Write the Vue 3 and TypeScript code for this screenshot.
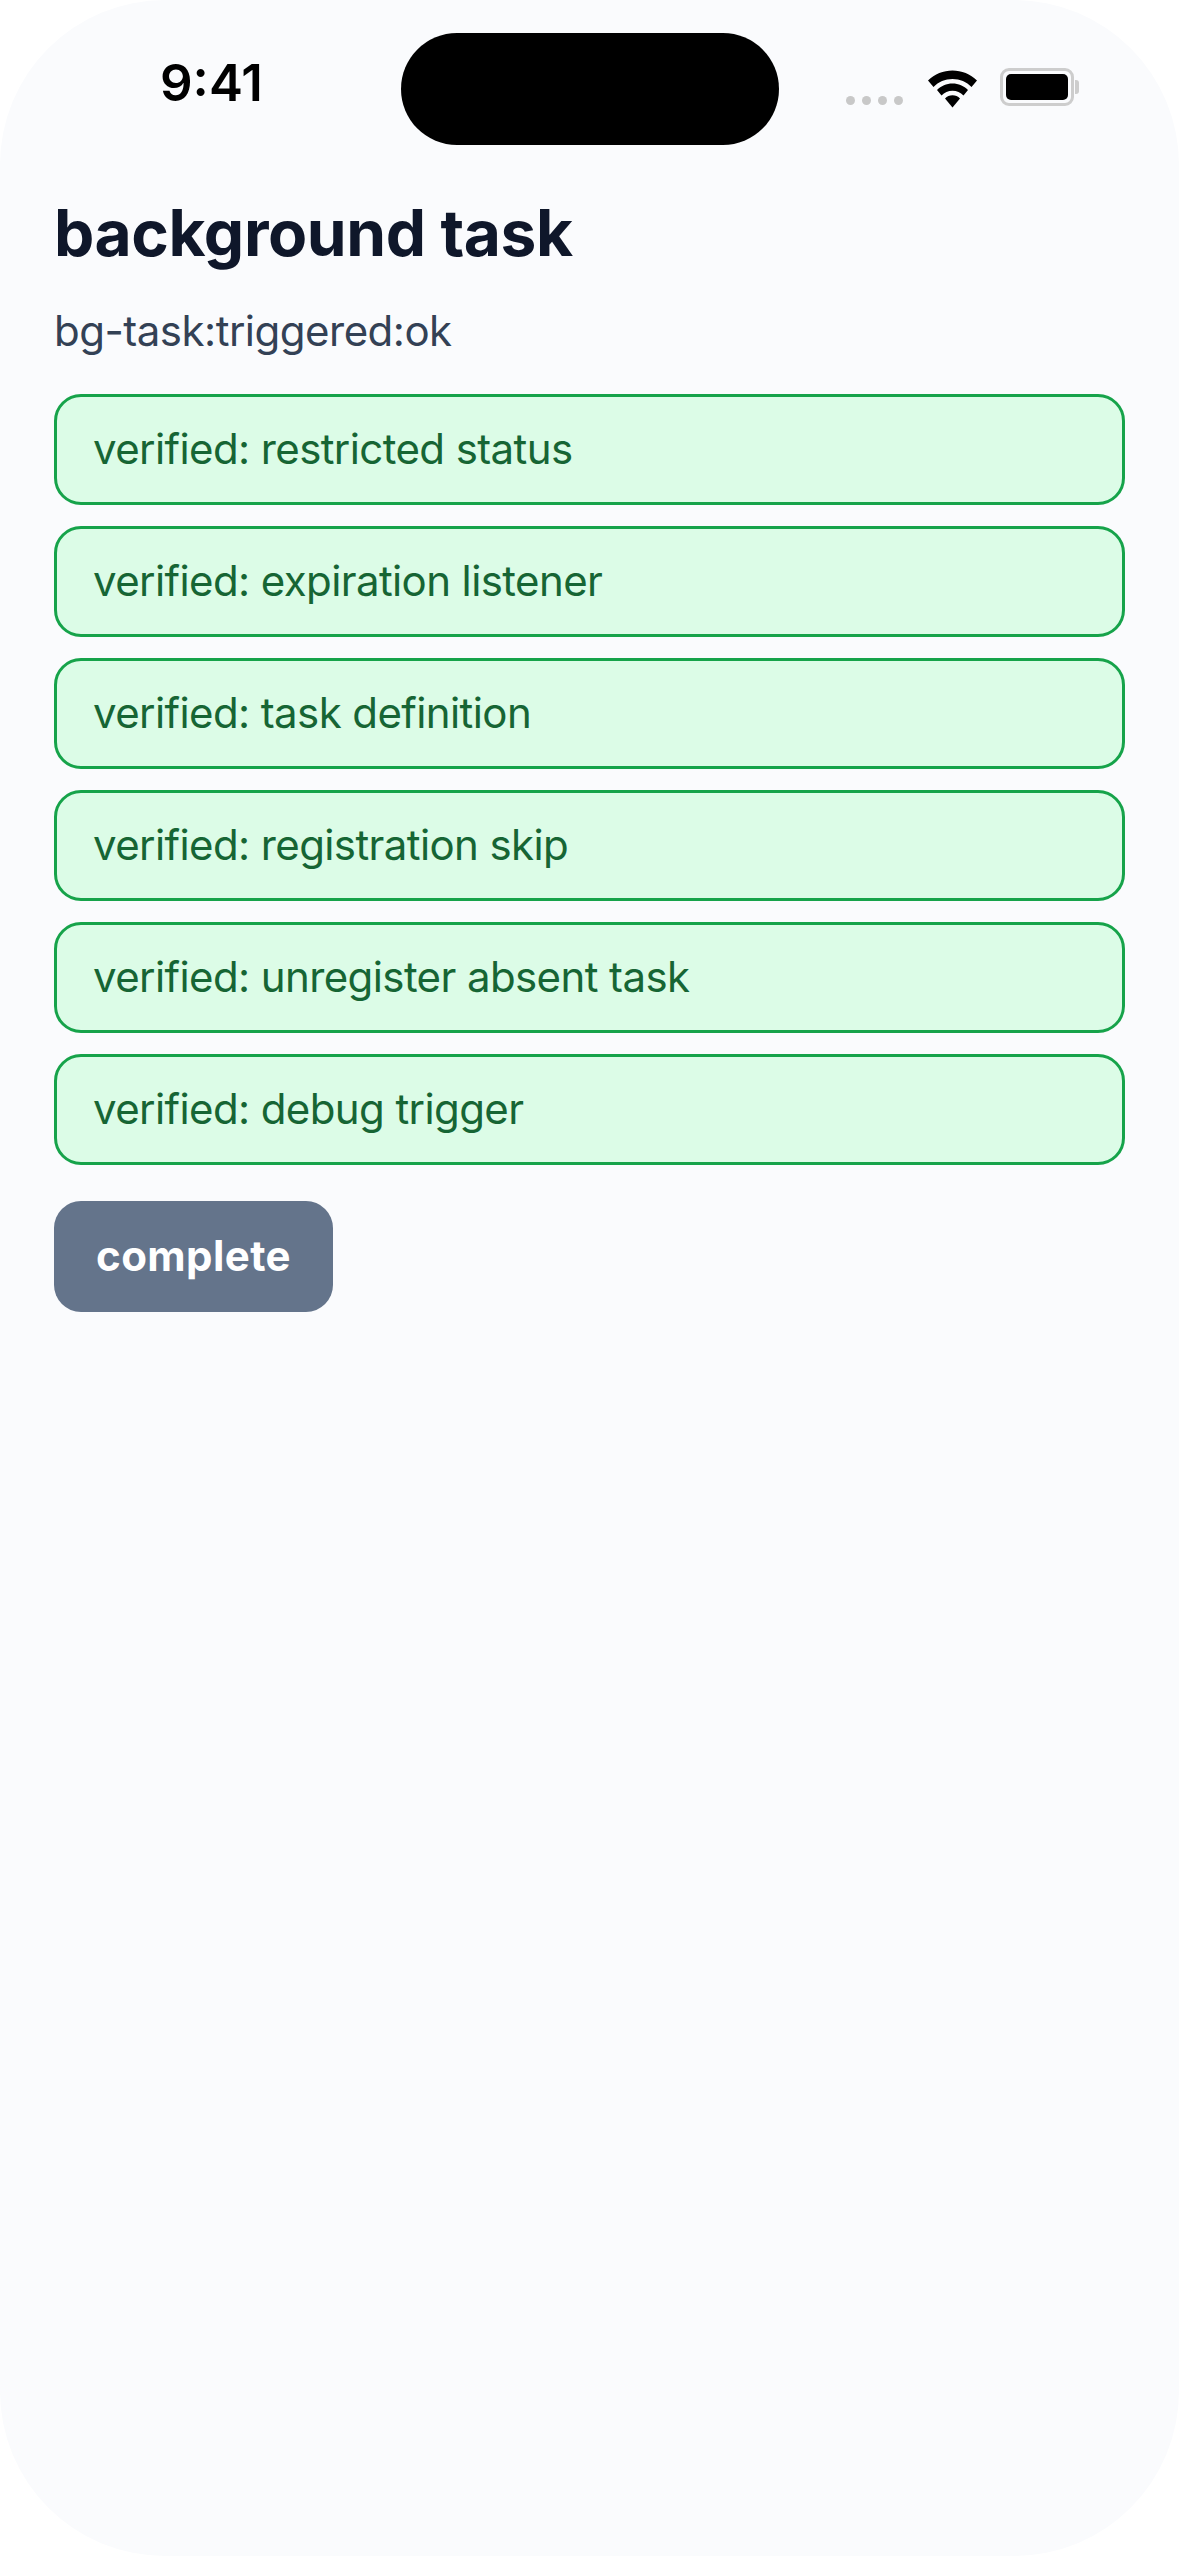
<script setup lang="ts">
const checks = [
  'verified: restricted status',
  'verified: expiration listener',
  'verified: task definition',
  'verified: registration skip',
  'verified: unregister absent task',
  'verified: debug trigger'
]
</script>

<template>
  <main class="screen">
    <header class="status">
      <span class="time">9:41</span>
      <div class="island"></div>
      <div class="indicators">
        <div class="dots"><i></i><i></i><i></i><i></i></div>
        <svg class="wifi" width="50" height="38" viewBox="0 0 50 38">
          <path d="M0 10.5C6.5 4 15.5 0.5 24.500 0.500C33.500 0.500 42.500 4 49 10.500L43.500 17C38.500 11.800 32 9 24.500 9C17 9 10.500 11.800 5.500 17Z" />
          <path d="M9 20C13 16 18.500 13.500 24.500 13.500C30.500 13.500 36 16 40 20L35.500 25.500C32.500 22.500 28.800 20.800 24.500 20.800C20.200 20.800 16.500 22.500 13.500 25.500Z" />
          <path d="M17 28.500C19 26.500 21.600 25.300 24.500 25.300C27.400 25.300 30 26.500 32 28.500L24.500 37.500Z" />
        </svg>
        <div class="battery"><div class="level"></div></div>
      </div>
    </header>
    <section class="content">
      <h1>background task</h1>
      <p class="result">bg-task:triggered:ok</p>
      <div class="list">
        <div v-for="c in checks" :key="c" class="check">{{ c }}</div>
      </div>
      <button class="done">complete</button>
    </section>
  </main>
</template>

<style scoped>
.screen {
  position: relative;
  width: 1179px;
  height: 2556px;
  background: #fafbfd;
  border-radius: 165px;
  overflow: hidden;
  font-family: Inter, "Noto Sans", sans-serif;
}
.status {
  height: 177px;
  display: flex;
  justify-content: space-between;
  align-items: flex-start;
  padding: 0 105px 0 160px;
  box-sizing: border-box;
}
.time {
  margin-top: 53px;
  font-size: 51px;
  line-height: 60px;
  font-weight: 600;
  color: #000;
}
.island {
  position: absolute;
  left: 401px;
  top: 33px;
  width: 378px;
  height: 112px;
  border-radius: 56px;
  background: #000;
}
.indicators {
  display: flex;
  align-items: flex-start;
  margin-top: 68px;
}
.dots {
  display: flex;
  gap: 7px;
  margin-top: 28px;
  margin-right: 25px;
}
.dots i {
  width: 9px;
  height: 9px;
  border-radius: 50%;
  background: #c8c8c8;
}
.wifi {
  fill: #000;
  margin-top: 2px;
  margin-right: 22px;
}
.battery {
  position: relative;
  width: 74px;
  height: 38px;
  box-sizing: border-box;
  border: 3px solid #cdcdcd;
  border-radius: 9px;
  padding: 3px;
}
.battery::after {
  content: '';
  position: absolute;
  right: -8px;
  top: 9px;
  width: 4px;
  height: 14px;
  background: #cdcdcd;
  border-radius: 0 3px 3px 0;
}
.level {
  height: 100%;
  background: #000;
  border-radius: 5px;
}
.content {
  padding: 0 54px;
}
h1 {
  margin: 18px 0 0;
  font-size: 64px;
  line-height: 76px;
  font-weight: 700;
  letter-spacing: -0.4px;
  color: #0f172a;
}
.result {
  margin: 33px 0 0;
  font-size: 42px;
  line-height: 54px;
  letter-spacing: -0.5px;
  color: #334155;
}
.list {
  display: flex;
  flex-direction: column;
  gap: 21px;
  margin-top: 36px;
}
.check {
  box-sizing: border-box;
  height: 111px;
  padding: 0 36px 2px;
  display: flex;
  align-items: center;
  background: #dcfce7;
  border: 3px solid #16a34a;
  border-radius: 27px;
  font-size: 42px;
  letter-spacing: -0.6px;
  color: #166534;
}
.done {
  display: block;
  margin-top: 36px;
  width: 279px;
  height: 111px;
  padding: 0 0 2px;
  border: none;
  border-radius: 27px;
  background: #64748b;
  color: #fff;
  font-family: inherit;
  font-size: 42px;
  font-weight: 700;
  letter-spacing: 0.4px;
}
</style>

<style>
html, body { background: #fff; }
</style>
